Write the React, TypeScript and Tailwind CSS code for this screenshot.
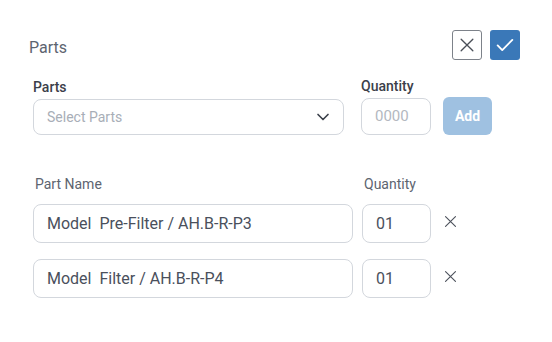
const font = { fontFamily: "Roboto, 'Liberation Sans', sans-serif" };

function CloseIcon({ className = "" }: { className?: string }) {
    return (
        <svg viewBox="0 0 24 24" className={className} fill="none" stroke="currentColor" strokeWidth={1.6} strokeLinecap="round">
            <path d="M5 5l14 14M19 5L5 19" />
        </svg>
    );
}

function PartRow({ name, qty }: { name: string; qty: string }) {
    return (
        <div className="flex items-center">
            <div className="w-[320px] h-[39px] border border-[#d3d7dd] rounded-[8px] flex items-center px-[13px] text-[16px] text-[#4a505c] whitespace-pre">
                {name}
            </div>
            <div className="ml-[9px] w-[69px] h-[39px] border border-[#d3d7dd] rounded-[8px] flex items-center px-[13px] text-[16px] text-[#4a505c]">
                {qty}
            </div>
            <button className="ml-[11px] w-[17px] h-[17px] text-[#4d525c] -mt-[5px]">
                <CloseIcon className="w-[17px] h-[17px]" />
            </button>
        </div>
    );
}

export default function App() {
    return (
        <div style={font} className="w-[552px] h-[342px] bg-white pt-[30px] pr-[32px]">
            <div className="flex items-center justify-between pl-[29px]">
                <div className="text-[16px] text-[#5d6470] mt-[5px]">Parts</div>
                <div className="flex gap-[8px]">
                    <button className="w-[30px] h-[30px] border border-[#7d828a] rounded-[3px] flex items-center justify-center text-[#4a4f58]">
                        <CloseIcon className="w-[20px] h-[20px]" />
                    </button>
                    <button className="w-[30px] h-[30px] bg-[#3a78b8] rounded-[3px] flex items-center justify-center text-white">
                        <svg viewBox="0 0 24 24" className="w-[22px] h-[22px]" fill="none" stroke="currentColor" strokeWidth={2} strokeLinecap="round" strokeLinejoin="round">
                            <path d="M4 12.5l5 5L20 6.5" />
                        </svg>
                    </button>
                </div>
            </div>

            <div className="pl-[33px] mt-[18px] flex items-end">
                <div className="flex flex-col">
                    <label className="text-[14px] font-medium text-[#3b404a] leading-[16px] mb-[4px]">Parts</label>
                    <div className="w-[311px] h-[36px] border border-[#d3d7dd] rounded-[8px] flex items-center justify-between pl-[13px] pr-[10px]">
                        <span className="text-[14px] text-[#a8aeb7]">Select Parts</span>
                        <svg viewBox="0 0 24 24" className="w-[20px] h-[20px] text-[#3b404a]" fill="none" stroke="currentColor" strokeWidth={2} strokeLinecap="round" strokeLinejoin="round">
                            <path d="M6 9l6 6 6-6" />
                        </svg>
                    </div>
                </div>
                <div className="flex flex-col ml-[17px]">
                    <label className="text-[14px] font-medium text-[#3b404a] leading-[16px] mb-[4px]">Quantity</label>
                    <div className="w-[70px] h-[37px] border border-[#d3d7dd] rounded-[8px] flex items-center px-[13px] text-[15px] text-[#b3b8bf]">
                        0000
                    </div>
                </div>
                <button className="ml-[12px] w-[49px] h-[38px] bg-[#9fc1e1] rounded-[6px] text-white text-[14px] font-bold">
                    Add
                </button>
            </div>

            <div className="pl-[33px] mt-[41px]">
                <div className="flex text-[14px] text-[#5d6470] leading-[16px] mb-[12px]">
                    <span className="w-[331px] pl-[2px]">Part Name</span>
                    <span>Quantity</span>
                </div>
                <div className="flex flex-col gap-[16px]">
                    <PartRow name="Model  Pre-Filter / AH.B-R-P3" qty="01" />
                    <PartRow name="Model  Filter / AH.B-R-P4" qty="01" />
                </div>
            </div>
        </div>
    );
}
